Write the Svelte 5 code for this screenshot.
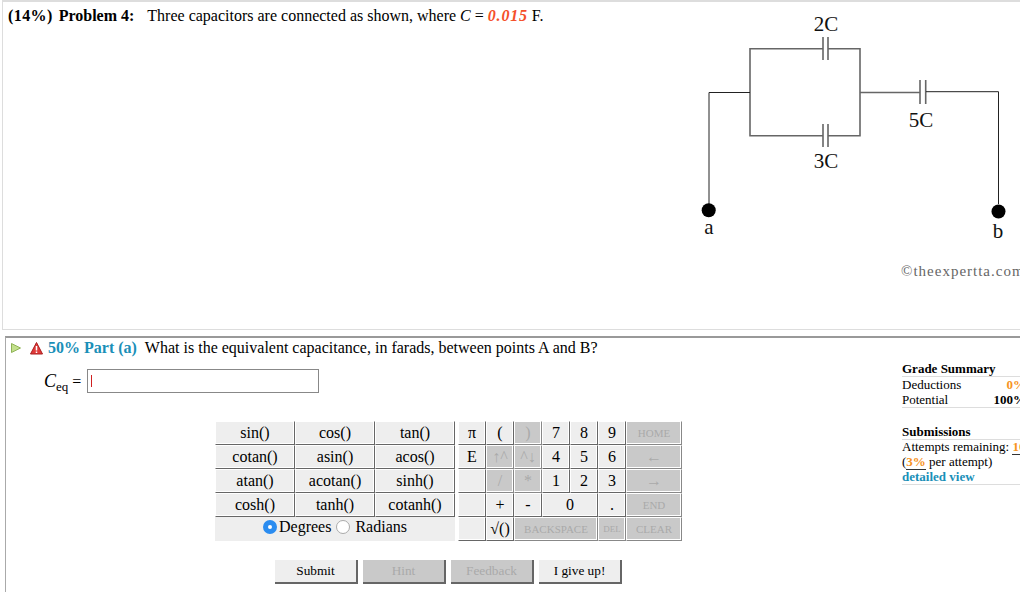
<script>
  const funcs = [
    ["sin()", "cos()", "tan()"],
    ["cotan()", "asin()", "acos()"],
    ["atan()", "acotan()", "sinh()"],
    ["cosh()", "tanh()", "cotanh()"],
  ];

  // text, columns spanned, disabled
  const keys = [
    [["π"], ["("], [")", 1, true], ["7"], ["8"], ["9"], ["HOME", 1, true]],
    [["E"], ["↑^", 1, true], ["^↓", 1, true], ["4"], ["5"], ["6"], ["←", 1, true]],
    [[""], ["/", 1, true], ["*", 1, true], ["1"], ["2"], ["3"], ["→", 1, true]],
    [[""], ["+"], ["-"], ["0", 2], ["."], ["END", 1, true]],
    [[""], ["√()"], ["BACKSPACE", 3, true], ["DEL", 1, true], ["CLEAR", 1, true]],
  ];

  const buttons = [
    ["Submit", false],
    ["Hint", true],
    ["Feedback", true],
    ["I give up!", false],
  ];

  const isWord = (label) => /^[A-Z]{3,}$/.test(label);
</script>

<div class="page">
  <section class="problem">
    <p class="statement">
      <b><span class="pct">(14%)</span>&nbsp; Problem 4:</b>
      <span class="intro">Three capacitors are connected as shown, where <i>C</i> = <b class="value">0.015</b> F.</span>
    </p>
    <svg class="circuit" width="330" height="290" viewBox="690 0 330 290">
      <g fill="none" stroke="#666" stroke-width="1.6">
        <path d="M823 48.700H750V135.700H823M828 135.700H860V48.700H828" />
        <path d="M860 92.500H920" />
        <path d="M823 37V60M828 37V60M823 124V147M828 124V147" />
        <path d="M920 80V104M925.700 80V104" />
      </g>
      <path d="M709 204V92.500H750M926 91.700H998.500V204" fill="none" stroke="#222" />
      <circle cx="708.700" cy="210.300" r="7" />
      <circle cx="998.500" cy="211.500" r="7" />
      <g class="labels" text-anchor="middle">
        <text x="826" y="31">2C</text>
        <text x="921" y="127">5C</text>
        <text x="826" y="168">3C</text>
        <text x="709" y="234">a</text>
        <text x="998" y="238">b</text>
      </g>
      <text class="credit" x="901" y="276">©theexpertta.com</text>
    </svg>
  </section>

  <section class="part">
    <div class="heading">
      <svg class="play" width="12" height="12" viewBox="0 0 12 12">
        <path d="M1.500 1.500L10.500 6L1.500 10.500Z" fill="#c3e08c" stroke="#8fb356" />
      </svg>
      <svg class="warn" width="13" height="13" viewBox="0 0 13 13">
        <path d="M6.500 .5L12.500 12H.5Z" fill="#e03a3a" stroke="#a81e1e" stroke-linejoin="round" />
        <path d="M6.500 4V8.500M6.500 9.500V11" stroke="#fff" stroke-width="1.500" />
      </svg>
      <b class="weight">50% Part (a)</b>
      <span>What is the equivalent capacitance, in farads, between points A and B?</span>
    </div>

    <div class="content">
      <div class="work">
        <div class="answer">
          <span class="symbol"><i>C</i><sub>eq</sub> =</span>
          <div class="field"><span class="caret"></span></div>
        </div>

        <div class="keypad">
          <div class="functions">
            <div class="func-grid">
              {#each funcs as row}
                {#each row as name}
                  <div class="key">{name}</div>
                {/each}
              {/each}
            </div>
            <div class="modes">
              <span class="radio on"></span><span>Degrees</span>
              <span class="radio"></span><span class="mode-last">Radians</span>
            </div>
          </div>

          <div class="key-grid">
            {#each keys as row}
              {#each row as [label, span = 1, disabled = false]}
                <div
                  class="key"
                  class:off={disabled}
                  class:word={isWord(label)}
                  class:small={label === "DEL"}
                  class:wide={label === "BACKSPACE"}
                  class:two={span === 2}
                >{label}</div>
              {/each}
            {/each}
          </div>
        </div>

        <div class="actions">
          {#each buttons as [label, disabled]}
            <div class="action" class:off={disabled}>{label}</div>
          {/each}
        </div>
      </div>

      <aside class="summary">
        <h4>Grade Summary</h4>
        <div class="line"><span>Deductions</span><b class="orange">0%</b></div>
        <div class="line last"><span>Potential</span><b>100%</b></div>
        <h4 class="second">Submissions</h4>
        <div class="attempts">
          <div class="first">Attempts remaining: <b class="orange under">10</b></div>
          <div>(<b class="orange under">3%</b> per attempt)</div>
          <div><b class="link">detailed view</b></div>
        </div>
      </aside>
    </div>
  </section>
</div>

<style>
  :global(body) {
    margin: 0;
    background: #fff;
  }

  .page {
    width: 1020px;
    height: 592px;
    overflow: hidden;
    font-family: "Liberation Serif", serif;
    font-size: 16px;
    color: #000;
  }

  .problem {
    position: relative;
    height: 327px;
    margin-left: 2px;
    border-top: 2px solid #ddd;
    border-left: 1px solid #ddd;
    border-bottom: 1px solid #ddd;
  }

  .statement {
    margin: 0;
    padding: 4px 0 0 5px;
    line-height: 20px;
  }

  .pct {
    letter-spacing: 0.4px;
    margin-right: -2px;
  }

  .intro {
    margin-left: 9px;
  }

  .value {
    font-style: italic;
    letter-spacing: 0.8px;
    color: #f5502a;
  }

  .circuit {
    position: absolute;
    top: -2px;
    left: 687px;
  }

  .labels {
    font-size: 21px;
    fill: #111;
  }

  .credit {
    font-size: 15px;
    letter-spacing: 1px;
    fill: #666;
  }

  .part {
    margin: 6px 0 0 5px;
    height: 260px;
    border-top: 2px solid #999;
    border-left: 1px solid #aaa;
  }

  .heading {
    display: flex;
    align-items: center;
    height: 20px;
    padding: 0 0 0 4px;
  }

  .play {
    margin-right: 8px;
  }

  .warn {
    margin-right: 5px;
  }

  .weight {
    color: #1a8fb8;
    margin-right: 8px;
  }

  .content {
    display: flex;
  }

  .work {
    width: 895px;
    flex: none;
  }

  .answer {
    display: flex;
    align-items: center;
    height: 26px;
    margin: 10px 0 0 38px;
  }

  .symbol {
    width: 43px;
    flex: none;
    white-space: nowrap;
  }

  .symbol i {
    font-size: 18px;
  }

  .symbol sub {
    font-size: 13px;
    line-height: 0;
  }

  .field {
    width: 227px;
    height: 22px;
    border: 1px solid #888;
    display: flex;
    align-items: center;
    padding-left: 3px;
  }

  .caret {
    width: 1px;
    height: 12px;
    background: #d02020;
  }

  .keypad {
    display: flex;
    margin: 27px 0 0 209px;
    gap: 3px;
  }

  .functions {
    width: 240px;
    background: #eee;
  }

  .func-grid {
    display: grid;
    grid-template-columns: 80px 80px 80px;
    grid-auto-rows: 24px;
    background: #fff;
  }

  .key {
    box-sizing: border-box;
    display: flex;
    align-items: center;
    justify-content: center;
    background: #eee;
    border-right: 1px solid #666;
    border-bottom: 1px solid #666;
    border-top: 1px solid #fff;
    border-left: 1px solid #fff;
    box-shadow: inset -1px -1px 0 #fff;
    white-space: nowrap;
    font-size: 16px;
    line-height: 1;
  }

  .key.off {
    background: #c9c9c9;
    color: #aaa;
    border-right-color: #888;
    border-bottom-color: #888;
  }

  .key.word {
    font-size: 11px;
  }

  .key.small {
    font-size: 9px;
  }

  .key.wide {
    grid-column: span 3;
  }

  .key.two {
    grid-column: span 2;
  }

  .modes {
    box-sizing: border-box;
    height: 24px;
    padding-bottom: 5px;
    display: flex;
    align-items: center;
    justify-content: center;
  }

  .radio {
    box-sizing: border-box;
    width: 14px;
    height: 14px;
    margin: 0 5px 0 5px;
    border-radius: 50%;
    border: 1px solid #aaa;
    background: #fff;
  }

  .radio.on {
    border: 5px solid #2a8cf0;
    margin: 0 2px 0 0;
  }

  .key-grid {
    display: grid;
    grid-template-columns: repeat(6, 28px) 56px;
    grid-auto-rows: 24px;
  }

  .actions {
    display: flex;
    gap: 5px;
    margin: 19px 0 0 269px;
  }

  .action {
    box-sizing: border-box;
    width: 83px;
    height: 24px;
    display: flex;
    align-items: center;
    justify-content: center;
    background: #eee;
    border-right: 2px solid #666;
    border-bottom: 2px solid #666;
    font-size: 13.3px;
  }

  .action.off {
    background: #c9c9c9;
    color: #aaa;
  }

  .summary {
    width: 125px;
    flex: none;
    margin-top: 4px;
    margin-left: 1px;
    font-size: 13px;
    line-height: 15px;
  }

  .summary h4 {
    margin: 0;
    font-size: 13px;
    line-height: 14px;
    border-bottom: 1px solid #ddd;
  }

  .summary .second {
    margin-top: 18px;
  }

  .line {
    display: flex;
    justify-content: space-between;
    width: 124px;
  }

  .last {
    box-shadow: 0 1px 0 #ddd;
  }

  .line b {
    flex: none;
  }

  .attempts {
    border-bottom: 1px solid #ddd;
    white-space: nowrap;
    overflow: hidden;
  }

  .first {
    line-height: 14px;
  }

  .orange {
    color: #f7931e;
  }

  .under {
    border-bottom: 1px solid #333;
  }

  .link {
    color: #1a8fb8;
  }
</style>
